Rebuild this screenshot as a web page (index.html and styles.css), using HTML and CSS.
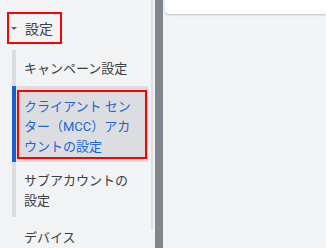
FILE: index.html
```html
<!DOCTYPE html>
<html lang="ja">
<head>
  <meta charset="UTF-8" />
  <title>設定</title>
  <link rel="stylesheet" href="styles.css">
</head>
<body>
  <div class="layout">
    <nav class="sidebar">
      <div class="section-head mark">
        <span class="caret"></span>
        <span>設定</span>
      </div>
      <ul class="menu">
        <li class="menu-item">キャンペーン設定</li>
        <li class="menu-item active"><span class="mark">クライアント センター（MCC）アカウントの設定</span></li>
        <li class="menu-item">サブアカウントの設定</li>
      </ul>
      <div class="menu-item loose">デバイス</div>
      <div class="track"></div>
    </nav>
    <div class="divider"></div>
    <main class="content">
      <div class="card"></div>
    </main>
  </div>
</body>
</html>
```

FILE: styles.css
```css
* {
  box-sizing: border-box;
}

body {
  margin: 0;
  font-family: Roboto, "Noto Sans CJK JP", sans-serif;
  background: #f1f3f4;
  color: #3c4043;
}

.layout {
  display: flex;
  height: 248px;
  overflow: hidden;
}

.sidebar {
  position: relative;
  width: 155px;
  flex-shrink: 0;
  background: #f1f3f4;
  padding-top: 12px;
}

.mark {
  border: 2px solid #ff0000;
}

.section-head {
  display: flex;
  align-items: center;
  gap: 8px;
  width: 55px;
  height: 32px;
  margin-left: 7px;
  padding-left: 3px;
  font-size: 14px;
}

.caret {
  width: 0;
  height: 0;
  border-left: 3px solid transparent;
  border-right: 3px solid transparent;
  border-top: 3px solid #5f6368;
  margin-left: -1px;
}

.menu {
  list-style: none;
  margin: 6px 0 0 12px;
  padding: 0;
  border-left: 4px solid #dadce0;
  width: 136px;
}

.menu-item {
  font-size: 13px;
  line-height: 20px;
  padding: 9px 10px 7px 8px;
}

.menu-item:last-child {
  padding-bottom: 6px;
}

.menu-item.active {
  margin-left: -4px;
  border-left: 4px solid #1a5fc7;
  background: #dcdde1;
  color: #1a67d2;
  padding: 4px 1px 3px 1px;
}

.menu-item.active .mark {
  display: block;
  padding: 5px 6px 0 5px;
}

.menu-item.loose {
  padding: 0 0 0 24px;
  margin-top: 11px;
}

.track {
  position: absolute;
  left: 151px;
  top: 0;
  width: 2px;
  height: 230px;
  background: #dfe1e5;
}

.divider {
  width: 8px;
  flex-shrink: 0;
  background: #80868b;
}

.content {
  flex: 1;
  padding-left: 2px;
}

.card {
  height: 14px;
  background: #ffffff;
  border-radius: 0 0 0 4px;
  box-shadow: 0 1px 2px rgba(60, 64, 67, 0.3);
}
```
